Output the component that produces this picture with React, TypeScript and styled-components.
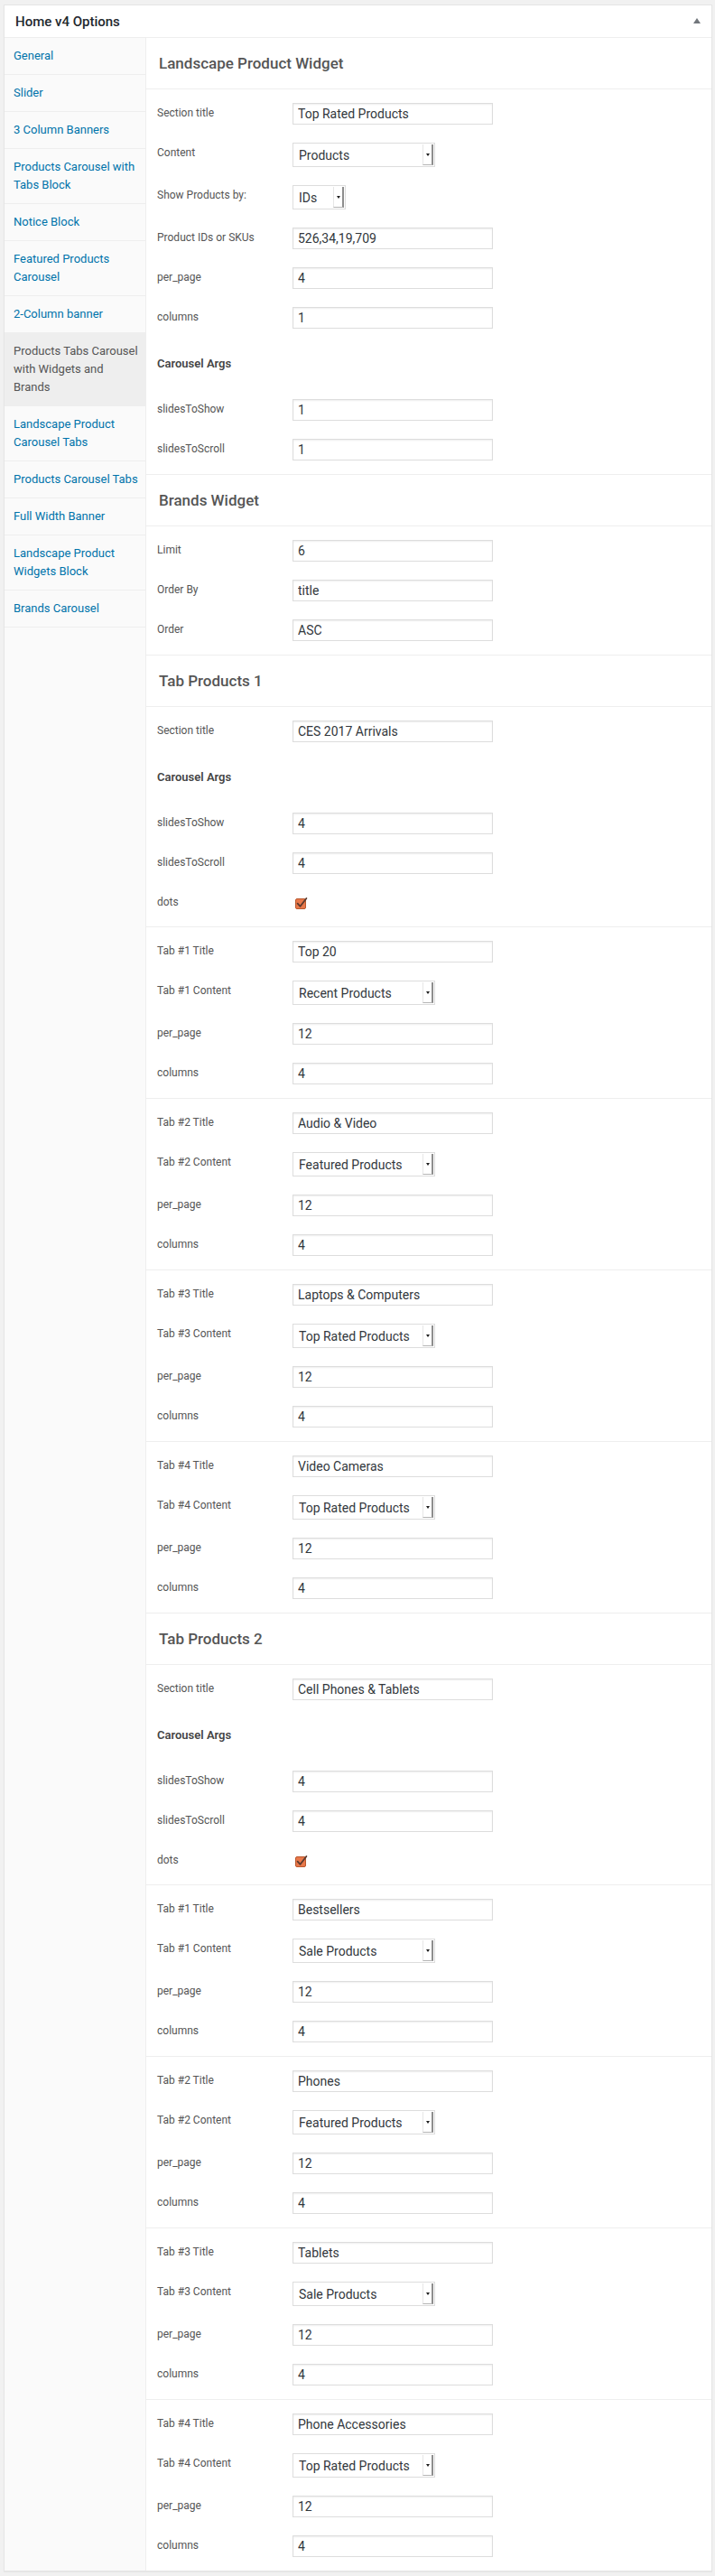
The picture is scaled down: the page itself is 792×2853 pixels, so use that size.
import React from 'react';
import styled, { createGlobalStyle } from 'styled-components';

const GlobalStyle = createGlobalStyle`
  html, body { margin: 0; padding: 0; background: #f1f1f1; }
  body { font-family: Roboto, "Liberation Sans", sans-serif; -webkit-font-smoothing: antialiased; }
  *, *::before, *::after { box-sizing: border-box; }
`;

const Page = styled.div`
  padding: 5px 3px 5px 4px;
`;

const Panel = styled.section`
  background: #fff;
  border: 1px solid #e5e5e5;
  box-shadow: 0 1px 1px rgba(0, 0, 0, 0.04);
`;

const PanelHeader = styled.header`
  height: 36px;
  border-bottom: 1px solid #eee;
  display: flex;
  align-items: center;
  justify-content: space-between;
  padding: 0 12px;
`;

const PanelTitle = styled.h2`
  margin: 0;
  font-size: 15px;
  font-weight: 500;
  color: #23282d;
`;

const ToggleArrow = styled.span`
  width: 0;
  height: 0;
  border-left: 4px solid transparent;
  border-right: 4px solid transparent;
  border-bottom: 6px solid #72777c;
  margin-top: -1px;
`;

const Body = styled.div`
  display: flex;
  align-items: stretch;
`;

const Sidebar = styled.nav`
  width: 157px;
  flex: none;
  background: #fafafa;
  border-right: 1px solid #eee;
`;

const NavItem = styled.div<{ $active?: boolean }>`
  padding: 10px 8px 10px 10px;
  font-size: 13px;
  line-height: 20px;
  border-bottom: 1px solid #eee;
  color: ${(p) => (p.$active ? '#555' : '#0073aa')};
  background: ${(p) => (p.$active ? '#eee' : 'transparent')};
`;

const Main = styled.div`
  flex: 1;
  min-width: 0;
`;

const SectionHeading = styled.h3`
  margin: 0;
  height: 57px;
  padding: 0 14px;
  display: flex;
  align-items: center;
  border-bottom: 1px solid #eee;
  font-size: 17px;
  font-weight: 500;
  color: #555;
`;

const Group = styled.div`
  padding: 5px 0;
  border-bottom: 1px solid #eee;
  &:last-child { border-bottom: none; }
`;

const Row = styled.div`
  display: flex;
  align-items: flex-start;
  padding: 10px 0 10px 12px;
`;

const Label = styled.label`
  width: 150px;
  flex: none;
  font-size: 12px;
  line-height: 23px;
  color: #555;
`;

const SubHeading = styled.h4`
  margin: 0;
  padding: 20px 12px;
  font-size: 13px;
  line-height: 18px;
  font-weight: 600;
  color: #444;
`;

const TextInput = styled.input`
  width: 222px;
  height: 24px;
  margin: 0;
  padding: 0 5px;
  border: 1px solid #ddd;
  box-shadow: inset 0 1px 2px rgba(0, 0, 0, 0.07);
  background: #fff;
  font-family: Roboto, "Liberation Sans", sans-serif;
  font-size: 14px;
  color: #32373c;
  outline: none;
`;

const SelectBox = styled.div<{ $width: number }>`
  width: ${(p) => p.$width}px;
  height: 27px;
  border: 1px solid #ddd;
  background: #fff;
  display: flex;
  align-items: stretch;
  padding: 1px 1px 1px 6px;
  font-size: 14px;
  color: #32373c;
`;

const SelectValue = styled.span`
  flex: 1;
  display: flex;
  align-items: center;
  white-space: nowrap;
  overflow: hidden;
`;

const SelectButton = styled.span`
  width: 12px;
  flex: none;
  display: flex;
  align-items: center;
  justify-content: center;
  background: #fff;
  border-left: 1px solid #e6e6e6;
  border-right: 2px solid #8e8e8e;
  border-bottom: 1px solid #b5b5b5;
  &::after {
    content: '';
    width: 0;
    height: 0;
    border-left: 2.5px solid transparent;
    border-right: 2.5px solid transparent;
    border-top: 3px solid #1e1e1e;
  }
`;

const CheckWrap = styled.span`
  display: inline-flex;
  margin: 4px 0 0 2px;
`;

type Field =
  | { kind: 'input'; label: string; value: string }
  | { kind: 'select'; label: string; value: string; width: number }
  | { kind: 'sub'; label: string }
  | { kind: 'check'; label: string };

type Section = { title: string; groups: Field[][] };

const inp = (label: string, value: string): Field => ({ kind: 'input', label, value });
const sel = (label: string, value: string, width = 158): Field => ({ kind: 'select', label, value, width });
const sub: Field = { kind: 'sub', label: 'Carousel Args' };
const dots: Field = { kind: 'check', label: 'dots' };

const tabGroup = (n: number, title: string, content: string): Field[] => [
  inp(`Tab #${n} Title`, title),
  sel(`Tab #${n} Content`, content),
  inp('per_page', '12'),
  inp('columns', '4'),
];

const sections: Section[] = [
  {
    title: 'Landscape Product Widget',
    groups: [
      [
        inp('Section title', 'Top Rated Products'),
        sel('Content', 'Products'),
        sel('Show Products by:', 'IDs', 59),
        inp('Product IDs or SKUs', '526,34,19,709'),
        inp('per_page', '4'),
        inp('columns', '1'),
        sub,
        inp('slidesToShow', '1'),
        inp('slidesToScroll', '1'),
      ],
    ],
  },
  {
    title: 'Brands Widget',
    groups: [[inp('Limit', '6'), inp('Order By', 'title'), inp('Order', 'ASC')]],
  },
  {
    title: 'Tab Products 1',
    groups: [
      [inp('Section title', 'CES 2017 Arrivals'), sub, inp('slidesToShow', '4'), inp('slidesToScroll', '4'), dots],
      tabGroup(1, 'Top 20', 'Recent Products'),
      tabGroup(2, 'Audio & Video', 'Featured Products'),
      tabGroup(3, 'Laptops & Computers', 'Top Rated Products'),
      tabGroup(4, 'Video Cameras', 'Top Rated Products'),
    ],
  },
  {
    title: 'Tab Products 2',
    groups: [
      [inp('Section title', 'Cell Phones & Tablets'), sub, inp('slidesToShow', '4'), inp('slidesToScroll', '4'), dots],
      tabGroup(1, 'Bestsellers', 'Sale Products'),
      tabGroup(2, 'Phones', 'Featured Products'),
      tabGroup(3, 'Tablets', 'Sale Products'),
      tabGroup(4, 'Phone Accessories', 'Top Rated Products'),
    ],
  },
];

const navItems = [
  'General',
  'Slider',
  '3 Column Banners',
  'Products Carousel with Tabs Block',
  'Notice Block',
  'Featured Products Carousel',
  '2-Column banner',
  'Products Tabs Carousel with Widgets and Brands',
  'Landscape Product Carousel Tabs',
  'Products Carousel Tabs',
  'Full Width Banner',
  'Landscape Product Widgets Block',
  'Brands Carousel',
];

const CheckedBox = () => (
  <CheckWrap>
    <svg width="16" height="16" viewBox="0 0 16 16" aria-hidden="true">
      <rect x="1.5" y="3.5" width="11" height="11" rx="1.5" fill="#e8784a" stroke="#b9572d" />
      <path d="M3.6 8.6 L6.6 11.8 L13.4 3" fill="none" stroke="#5b3a2f" strokeWidth="1.8" strokeLinecap="round" strokeLinejoin="round" />
    </svg>
  </CheckWrap>
);

const FieldRow = ({ f }: { f: Field }) => {
  if (f.kind === 'sub') return <SubHeading>{f.label}</SubHeading>;
  return (
    <Row>
      <Label>{f.label}</Label>
      {f.kind === 'input' && <TextInput defaultValue={f.value} />}
      {f.kind === 'select' && (
        <SelectBox $width={f.width} role="listbox">
          <SelectValue>{f.value}</SelectValue>
          <SelectButton />
        </SelectBox>
      )}
      {f.kind === 'check' && <CheckedBox />}
    </Row>
  );
};

export default function App() {
  return (
    <Page>
      <GlobalStyle />
      <Panel>
        <PanelHeader>
          <PanelTitle>Home v4 Options</PanelTitle>
          <ToggleArrow />
        </PanelHeader>
        <Body>
          <Sidebar>
            {navItems.map((n) => (
              <NavItem key={n} $active={n === 'Products Tabs Carousel with Widgets and Brands'}>
                {n}
              </NavItem>
            ))}
          </Sidebar>
          <Main>
            {sections.map((s) => (
              <React.Fragment key={s.title}>
                <SectionHeading>{s.title}</SectionHeading>
                {s.groups.map((g, gi) => (
                  <Group key={gi}>
                    {g.map((f, fi) => (
                      <FieldRow key={fi} f={f} />
                    ))}
                  </Group>
                ))}
              </React.Fragment>
            ))}
          </Main>
        </Body>
      </Panel>
    </Page>
  );
}
